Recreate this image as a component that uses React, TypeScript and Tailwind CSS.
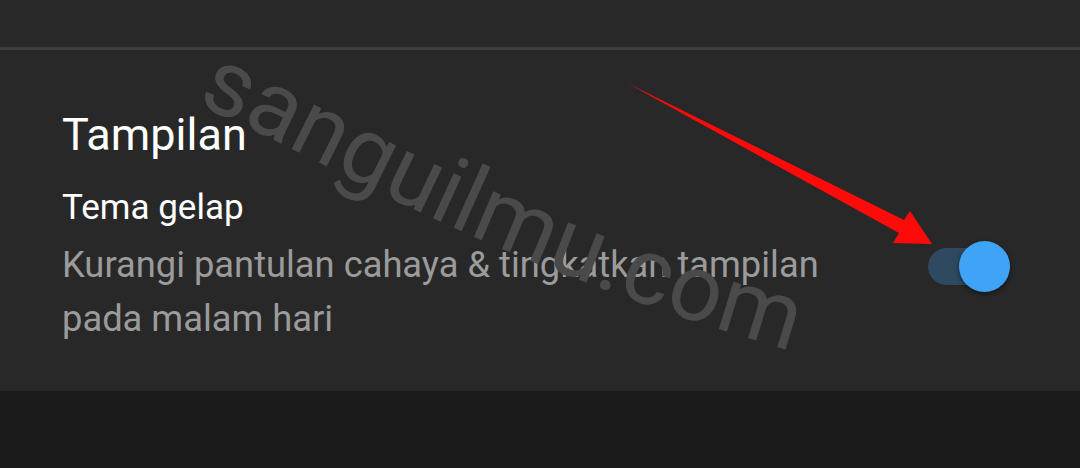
import React from "react";

const font = { fontFamily: "Roboto, 'Noto Sans', sans-serif" };

function Watermark() {
  return (
    <svg className="pointer-events-none absolute inset-0" width="1080" height="468" viewBox="0 0 1080 468">
      <defs>
        <path id="wm" d="M 196 104 C 330 160, 480 265, 830 362" fill="none" />
      </defs>
      <text fontFamily="Roboto, sans-serif" fontSize="94" fill="#4a4a4a">
        <textPath href="#wm">sanguilmu.com</textPath>
      </text>
    </svg>
  );
}

function Arrow() {
  return (
    <svg className="pointer-events-none absolute inset-0" width="1080" height="468" viewBox="0 0 1080 468">
      <polygon
        points="627,83 904,220 910,211 932,244 893,243 899,233"
        fill="#ff0a0a"
      />
    </svg>
  );
}

export default function App() {
  return (
    <div className="relative w-[1080px] h-[468px] overflow-hidden bg-[#1b1b1b]" style={font}>
      <div className="h-[47px] bg-[#292929]" />
      <div className="h-[3px] bg-[#3d3d3d]" />
      <section className="bg-[#282828] pl-[62px] pr-[70px] pt-[58px] pb-[45px]">
        <h2 className="text-[45px] leading-[54px] text-white">Tampilan</h2>
        <div className="mt-[25px] flex items-center justify-between">
          <div>
            <div className="text-[35px] leading-[42px] text-white">Tema gelap</div>
            <p className="mt-[9px] text-[36.3px] leading-[54px] text-[#9b9b9b]">
              Kurangi pantulan cahaya &amp; tingkatkan tampilan
              <br />
              pada malam hari
            </p>
          </div>
          <div className="relative w-[82px] h-[50px] flex items-center">
            <div className="absolute left-0 w-[70px] h-[37px] rounded-full bg-[#2f4961]" />
            <div className="absolute right-0 w-[51px] h-[51px] rounded-full bg-[#3fa3f7] shadow-[0_2px_5px_rgba(0,0,0,0.5)]" />
          </div>
        </div>
      </section>
      <Watermark />
      <Arrow />
    </div>
  );
}
